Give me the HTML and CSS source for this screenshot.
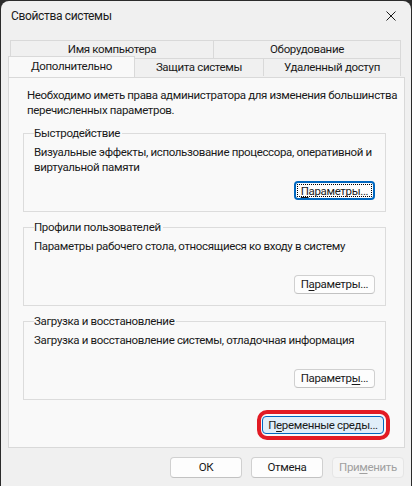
FILE: index.html
```html
<!DOCTYPE html>
<html lang="ru">

<head>
    <meta charset="UTF-8">
    <meta name="viewport" content="width=device-width, initial-scale=1.0">
    <title>Свойства системы</title>
    <link rel="stylesheet" href="styles.css">
</head>

<body>

    <div class="window">

        <!-- Заголовок -->
        <div class="titlebar">
            <span class="title">Свойства системы</span>
            <svg class="close" width="10" height="10" viewBox="0 0 10 10">
                <path d="M0.5 0.5 L9.5 9.5 M9.5 0.5 L0.5 9.5" stroke="#1b1b1b" stroke-width="1" fill="none" />
            </svg>
        </div>

        <!-- Вкладки -->
        <div class="tabs">
            <div class="tab-row back">
                <div class="tab tab-name">Имя компьютера</div>
                <div class="tab tab-hw">Оборудование</div>
            </div>
            <div class="tab-row front">
                <div class="tab active tab-adv">Дополнительно</div>
                <div class="tab tab-prot">Защита системы</div>
                <div class="tab tab-remote">Удаленный доступ</div>
            </div>
        </div>

        <div class="panel">
            <p class="intro">Необходимо иметь права администратора для изменения большинства<br>перечисленных параметров.</p>

            <fieldset class="group">
                <legend>Быстродействие</legend>
                <p class="desc">Визуальные эффекты, использование процессора, оперативной и<br>виртуальной памяти</p>
                <div class="actions">
                    <button class="btn focused"><span class="focus-ring"><u>П</u>араметры...</span></button>
                </div>
            </fieldset>

            <fieldset class="group">
                <legend>Профили пользователей</legend>
                <p class="desc">Параметры рабочего стола, относящиеся ко входу в систему</p>
                <div class="actions">
                    <button class="btn">П<u>а</u>раметры...</button>
                </div>
            </fieldset>

            <fieldset class="group">
                <legend>Загрузка и восстановление</legend>
                <p class="desc">Загрузка и восстановление системы, отладочная информация</p>
                <div class="actions">
                    <button class="btn">Параметр<u>ы</u>...</button>
                </div>
            </fieldset>

            <div class="env-row">
                <div class="highlight">
                    <button class="btn env">П<u>е</u>ременные среды...</button>
                </div>
            </div>
        </div>

        <div class="footer">
            <button class="btn dialog">ОК</button>
            <button class="btn dialog">Отмена</button>
            <button class="btn dialog" disabled>При<u>м</u>енить</button>
        </div>

    </div>

</body>

</html>
```

FILE: styles.css
```css
* {
    box-sizing: border-box;
}

body {
    margin: 0;
    background-color: #2b2b2b;
    font-family: Roboto, "Liberation Sans", sans-serif;
    font-size: 11.5px;
    letter-spacing: -0.35px;
    color: #1a1a1a;
}

.window {
    margin: 1px 1px 0;
    height: 485px;
    background-color: #f0f0f0;
    border-radius: 8px 8px 0 0;
    padding: 0 6px 0 7px;
    display: flex;
    flex-direction: column;
    white-space: nowrap;
}

.titlebar {
    height: 31px;
    display: flex;
    align-items: center;
    justify-content: space-between;
    padding: 0 9px 1px 3px;
    font-size: 12px;
}

.close {
    display: block;
}

/* вкладки */
.tabs {
    margin-top: 8px;
    height: 37px;
}

.tab-row {
    display: flex;
    height: 18px;
}

.tab-row.back {
    padding-left: 2px;
}

.tab {
    background-color: #f0f0f0;
    border: 1px solid #d9d9d9;
    border-bottom: none;
    margin-right: -1px;
    text-align: center;
    line-height: 17px;
    height: 18px;
}

.tab-name {
    width: 204px;
}

.tab-hw {
    width: 188px;
}

.tab-adv {
    width: 127px;
}

.tab-prot {
    width: 130px;
}

.tab-remote {
    width: 138px;
}

.tab.active {
    background-color: #f9f9f9;
    height: 21px;
    margin-top: -2px;
    line-height: 18px;
    position: relative;
    z-index: 1;
}

/* содержимое */
.panel {
    height: 371px;
    background-color: #f9f9f9;
    border: 1px solid #d9d9d9;
    padding: 10px 18px 0 14px;
}

.intro {
    margin: 0 0 0 4px;
    line-height: 15px;
}

.group {
    margin: 8px 0 0 0;
    padding: 0 10px 11px 10px;
    border: 1px solid #dcdcdc;
    min-inline-size: 0;
}

.group legend {
    padding: 0 2px 0 0;
    line-height: 15px;
}

.desc {
    margin: 4px 0 0 0;
    line-height: 15px;
    min-height: 30px;
}

.actions {
    display: flex;
    justify-content: flex-end;
    margin-top: 6px;
}

.btn {
    font-family: Roboto, "Liberation Sans", sans-serif;
    font-size: 11.5px;
    letter-spacing: -0.35px;
    color: #1a1a1a;
    background-color: #fdfdfd;
    border: 1px solid #d0d0d0;
    border-bottom-color: #c2c2c2;
    border-radius: 4px;
    height: 19px;
    width: 81px;
    padding: 0;
    line-height: 17px;
    white-space: nowrap;
}

.btn u {
    text-underline-offset: 2px;
}

.btn.focused {
    border: 2px solid #0067c0;
    padding: 1px;
    line-height: 13px;
}

.focus-ring {
    display: block;
    height: 100%;
    border: 1px dotted #000;
    border-radius: 1px;
}

.env-row {
    display: flex;
    justify-content: flex-end;
    margin-top: 10px;
}

.highlight {
    border: 4px solid #e21b24;
    border-radius: 10px;
    padding: 2px 2px 2px 1px;
    margin-right: -4px;
}

.btn.env {
    width: 122px;
    height: 18px;
    display: block;
    background-color: #e0eef9;
    border-color: #0067c0;
    line-height: 16px;
}

.footer {
    display: flex;
    justify-content: flex-end;
    gap: 9px;
    margin-top: 9px;
    padding-right: 1px;
}

.btn.dialog {
    width: 72px;
    height: 21px;
    line-height: 19px;
}

.btn.dialog:disabled {
    color: #a0a0a0;
    background-color: #f5f5f5;
    border-color: #e5e5e5;
}
```
